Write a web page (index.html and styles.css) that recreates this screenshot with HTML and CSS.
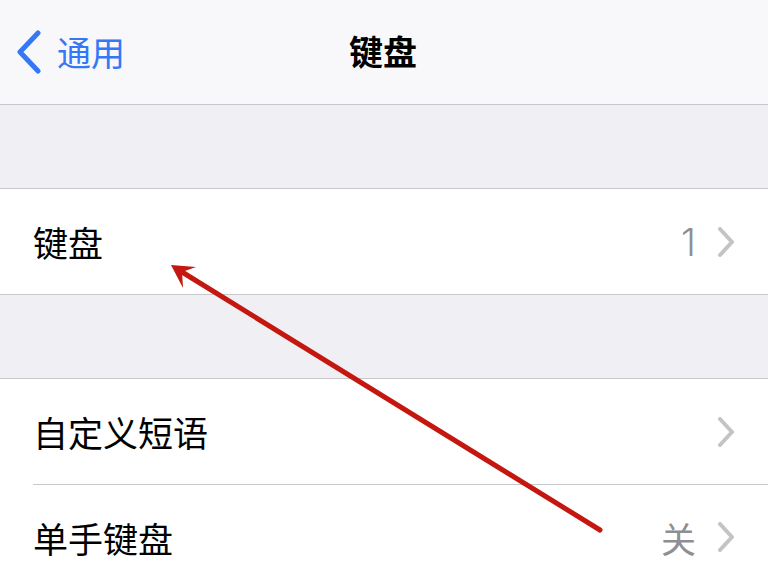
FILE: index.html
```html
<!DOCTYPE html>
<html>
<head>
	<meta charset="utf-8">
	<meta name="viewport" content="width=device-width, initial-scale=1">
	<title>键盘</title>
	<link rel="stylesheet" href="styles.css">
</head>
<body>
<div class="screen">

<header class="navbar">
	<a class="back" href="#">
		<svg class="back-icon" width="26" height="44" viewBox="0 0 26 44">
			<path d="M22 3 L4 22 L22 41" fill="none" stroke="#3478f6" stroke-width="5" stroke-linecap="round" stroke-linejoin="round"/>
		</svg>
		<span>通用</span>
	</a>
	<h1 class="title">键盘</h1>
</header>

<div class="gap"></div>

<section class="group">
	<div class="row">
		<span class="label">键盘</span>
		<span class="value num">1</span>
		<svg class="chev" width="16" height="30" viewBox="0 0 16 30"><path d="M2 2 L14 15 L2 28" fill="none" stroke="#c4c4c7" stroke-width="4" stroke-linecap="round" stroke-linejoin="round"/></svg>
	</div>
</section>

<div class="gap"></div>

<section class="group">
	<div class="row">
		<span class="label">自定义短语</span>
		<svg class="chev" width="16" height="30" viewBox="0 0 16 30"><path d="M2 2 L14 15 L2 28" fill="none" stroke="#c4c4c7" stroke-width="4" stroke-linecap="round" stroke-linejoin="round"/></svg>
	</div>
	<div class="row">
		<span class="label">单手键盘</span>
		<span class="value">关</span>
		<svg class="chev" width="16" height="30" viewBox="0 0 16 30"><path d="M2 2 L14 15 L2 28" fill="none" stroke="#c4c4c7" stroke-width="4" stroke-linecap="round" stroke-linejoin="round"/></svg>
	</div>
</section>

<!-- annotation arrow drawn over the screenshot -->
<svg class="arrow" width="768" height="576" viewBox="0 0 768 576">
	<line x1="600" y1="530" x2="182" y2="272" stroke="#c4170f" stroke-width="5" stroke-linecap="round"/>
	<polygon points="171,265 196,267 182,272 183,288" fill="#c4170f"/>
</svg>

</div>
</body>
</html>
```

FILE: styles.css
```css
html, *, *::before,
*::after{
	box-sizing: border-box;
}
body{
	margin: 0;
	overflow: hidden;
	font-family: "Noto Sans CJK SC", "Noto Sans", sans-serif;
}
.screen{
	position: relative;
	width: 768px;
	height: 576px;
	background: #efeff4;
	overflow: hidden;
}
.navbar{
	position: relative;
	height: 105px;
	background: #f8f8fa;
	border-bottom: 1px solid #c8c7cc;
	display: flex;
	align-items: center;
	justify-content: center;
}
.back{
	position: absolute;
	left: 16px;
	top: 30px;
	display: flex;
	align-items: center;
	gap: 15px;
	color: #3478f6;
	text-decoration: none;
	font-size: 34px;
	line-height: 44px;
}
.title{
	margin: 0;
	font-size: 34px;
	font-weight: 700;
	color: #000;
	line-height: 1;
	padding-bottom: 2px;
	padding-right: 2px;
}
.gap{
	height: 83px;
}
.group{
	background: #fff;
	border-top: 1px solid #c8c7cc;
	border-bottom: 1px solid #c8c7cc;
}
.row{
	display: flex;
	align-items: center;
	height: 105px;
	margin-left: 33px;
	padding-right: 34px;
	font-size: 35px;
	color: #000;
}
.row + .row{
	border-top: 1px solid #c8c7cc;
}
.label{
	flex: 1;
}
.value{
	color: #8e8e93;
	margin-right: 22px;
}
.num{
	font-family: "Inter", "Roboto", sans-serif;
	font-size: 38px;
	font-weight: 300;
}
.chev{
	display: block;
}
.arrow{
	position: absolute;
	left: 0;
	top: 0;
}
```
